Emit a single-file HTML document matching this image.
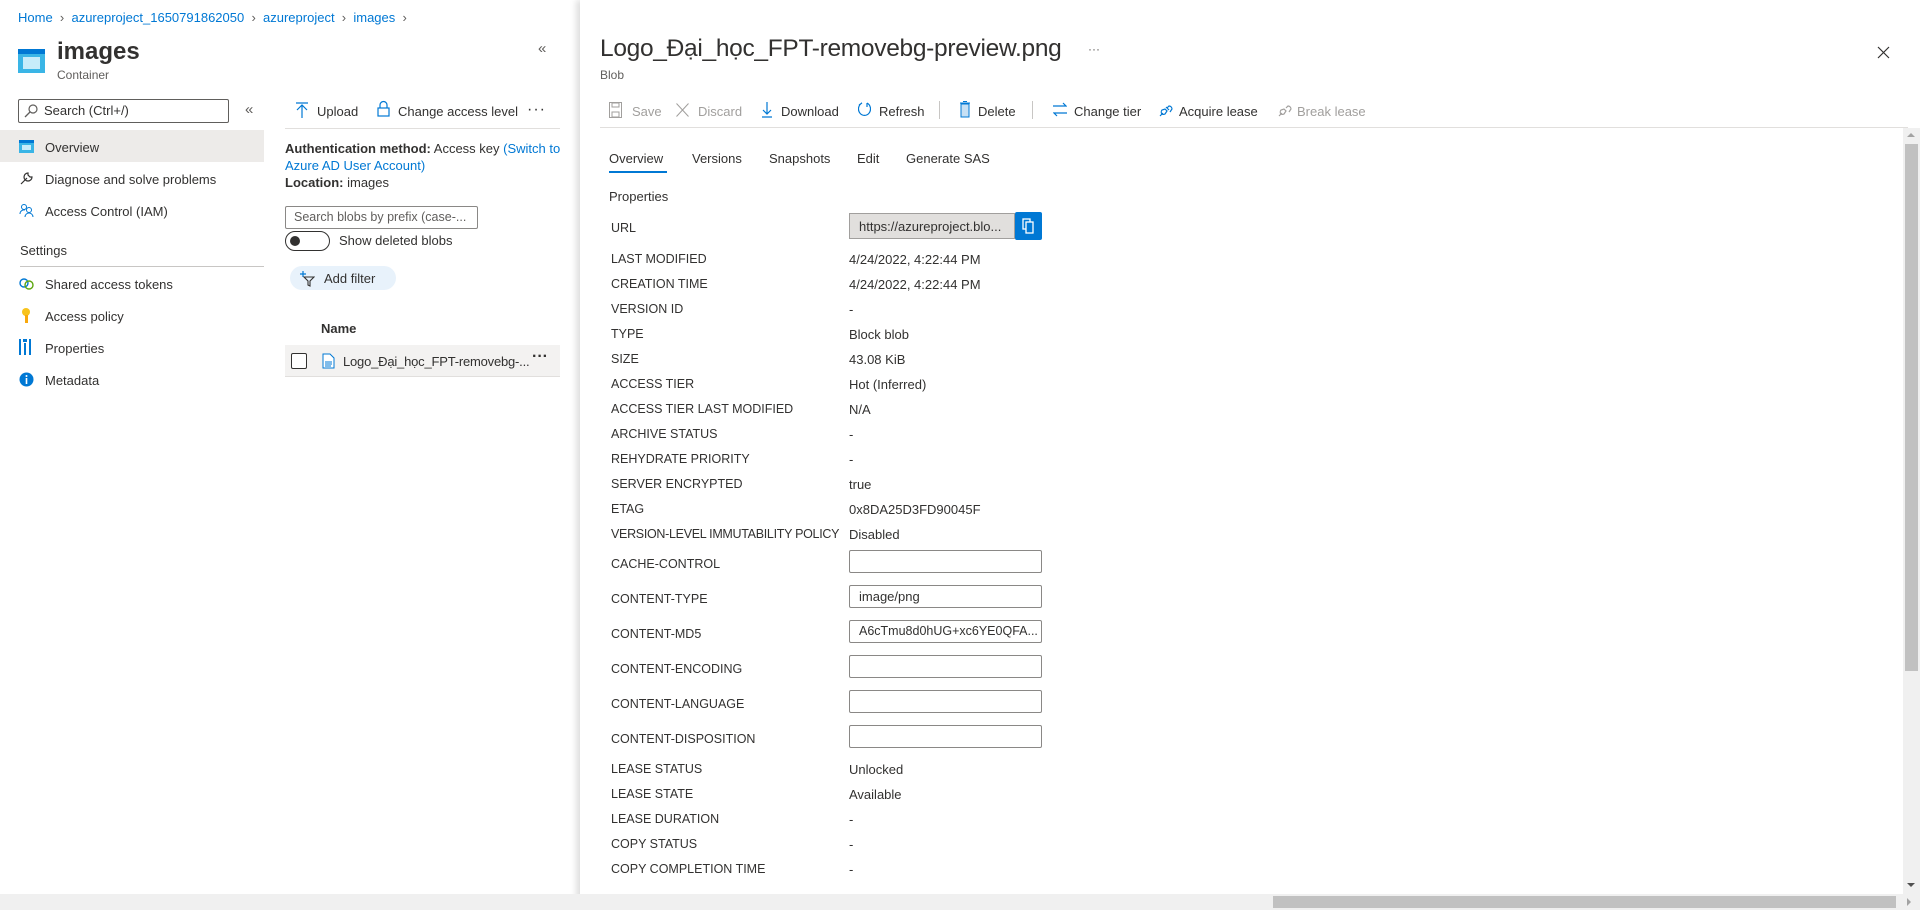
<!DOCTYPE html>
<html><head><meta charset="utf-8"><style>
*{margin:0;padding:0;box-sizing:border-box}
body{width:1920px;height:910px;overflow:hidden;background:#fff;font-family:"Liberation Sans",sans-serif;font-size:13px;color:#323130;position:relative}
.a{position:absolute;white-space:nowrap}
.l{color:#0078d4}
.ic{position:absolute}
.lbl{position:absolute;left:611px;font-size:12.5px;color:#323130}
.val{position:absolute;left:849px}
.inp{position:absolute;left:849px;width:193px;height:23px;border:1px solid #8a8886;border-radius:2px;padding:3px 9px;font-size:13px}
.g{color:#a19f9d}
</style></head><body>
<div class="a l" style="left:18px;top:10px">Home <span style="color:#605e5c">&nbsp;›&nbsp;</span> azureproject_1650791862050 <span style="color:#605e5c">&nbsp;›&nbsp;</span> azureproject <span style="color:#605e5c">&nbsp;›&nbsp;</span> images <span style="color:#605e5c">&nbsp;›</span></div>
<svg class="ic" style="left:18px;top:49px" width="27" height="24"><rect x="0" y="0" width="27" height="24" fill="#3ab5e6"/><rect x="0" y="0" width="27" height="5" fill="#0078d4"/><rect x="5" y="8" width="17" height="12" fill="#c7ecfa"/></svg>
<div class="a" style="left:57px;top:38px;font-size:24px;font-weight:bold;color:#323130">images</div>
<div class="a" style="left:57px;top:68px;font-size:12px;color:#605e5c">Container</div>
<div class="a" style="left:538px;top:40px;font-size:15px;color:#605e5c">«</div>
<div class="a" style="left:18px;top:99px;width:211px;height:24px;border:1px solid #605e5c;border-radius:2px"></div>
<svg class="ic" style="left:24px;top:104px" width="14" height="14"><circle cx="9" cy="5" r="4" fill="none" stroke="#605e5c" stroke-width="1.2"/><path d="M6 8 L1 13" stroke="#605e5c" stroke-width="1.3"/></svg>
<div class="a" style="left:44px;top:103px;color:#323130">Search (Ctrl+/)</div>
<div class="a" style="left:245px;top:101px;font-size:15px;color:#605e5c">«</div>
<div class="a" style="left:0;top:130px;width:264px;height:32px;background:#edebe9"></div>
<svg class="ic" style="left:19px;top:140px" width="15" height="13"><rect width="15" height="13" fill="#3ab5e6"/><rect width="15" height="3" fill="#0078d4"/><rect x="3" y="5" width="9" height="5" fill="#c7ecfa"/></svg>
<div class="a" style="left:45px;top:140px">Overview</div>
<svg class="ic" style="left:19px;top:171px" width="15" height="15"><path d="M2 13 L8 7 M9 2 a4 4 0 1 0 4 4 L11 6 L9 4 Z" fill="none" stroke="#323130" stroke-width="1.2"/></svg>
<div class="a" style="left:45px;top:172px">Diagnose and solve problems</div>
<svg class="ic" style="left:19px;top:203px" width="16" height="15"><circle cx="5" cy="4" r="2.5" fill="none" stroke="#0078d4"/><circle cx="10" cy="7" r="2.5" fill="none" stroke="#0078d4"/><path d="M1 11 a4 4 0 0 1 5 -4 M6 14 a4 4 0 0 1 8 0" fill="none" stroke="#0078d4"/></svg>
<div class="a" style="left:45px;top:204px">Access Control (IAM)</div>
<div class="a" style="left:20px;top:243px">Settings</div>
<div class="a" style="left:20px;top:266px;width:244px;height:1px;background:#c8c6c4"></div>
<svg class="ic" style="left:19px;top:278px" width="15" height="12"><circle cx="5" cy="5" r="4" fill="none" stroke="#0078d4" stroke-width="1.4"/><circle cx="10" cy="7" r="4" fill="none" stroke="#5ea60f" stroke-width="1.4"/></svg>
<div class="a" style="left:45px;top:277px">Shared access tokens</div>
<svg class="ic" style="left:21px;top:307px" width="10" height="17"><circle cx="5" cy="5" r="4" fill="#f8c31d"/><rect x="4" y="8" width="3" height="8" fill="#f8a80d"/></svg>
<div class="a" style="left:45px;top:309px">Access policy</div>
<svg class="ic" style="left:19px;top:339px" width="13" height="16"><rect x="0" y="0" width="2" height="16" fill="#0078d4"/><rect x="5" y="4" width="2" height="12" fill="#0078d4"/><rect x="10" y="0" width="2" height="16" fill="#0078d4"/><rect x="4" y="0" width="4" height="3" fill="#0078d4"/></svg>
<div class="a" style="left:45px;top:341px">Properties</div>
<svg class="ic" style="left:19px;top:372px" width="15" height="15"><circle cx="7.5" cy="7.5" r="7" fill="#0078d4"/><rect x="6.7" y="6" width="1.6" height="6" fill="#fff"/><circle cx="7.5" cy="4" r="1" fill="#fff"/></svg>
<div class="a" style="left:45px;top:373px">Metadata</div>
<svg class="ic" style="left:295px;top:102px" width="14" height="16"><path d="M1 1 H13 M7 3 V16 M2 8 L7 3 L12 8" fill="none" stroke="#0078d4" stroke-width="1.2"/></svg>
<div class="a" style="left:317px;top:104px">Upload</div>
<svg class="ic" style="left:377px;top:100px" width="13" height="17"><path d="M3 8 V5 a3.5 3.5 0 0 1 7 0 V8" fill="none" stroke="#0078d4" stroke-width="1.2"/><rect x="1" y="8" width="11" height="8" fill="none" stroke="#0078d4" stroke-width="1.2"/></svg>
<div class="a" style="left:398px;top:104px">Change access level</div>
<div class="a" style="left:527px;top:101px;font-size:16px;letter-spacing:1px">···</div>
<div class="a" style="left:285px;top:128px;width:275px;height:1px;background:#e1dfdd"></div>
<div class="a" style="left:285px;top:141px"><b>Authentication method:</b> Access key <span class="l">(Switch to</span></div>
<div class="a l" style="left:285px;top:158px">Azure AD User Account)</div>
<div class="a" style="left:285px;top:175px"><b>Location:</b> images</div>
<div class="a" style="left:285px;top:206px;width:193px;height:23px;border:1px solid #8a8886;border-radius:2px;padding:3px 8px;color:#605e5c;font-size:12.5px;overflow:hidden">Search blobs by prefix (case-...</div>
<div class="a" style="left:285px;top:231px;width:45px;height:20px;border:1px solid #323130;border-radius:10px"></div>
<div class="a" style="left:290px;top:236px;width:10px;height:10px;border-radius:5px;background:#323130"></div>
<div class="a" style="left:339px;top:233px">Show deleted blobs</div>
<div class="a" style="left:290px;top:266px;width:106px;height:24px;border-radius:12px;background:#e8f2fb"></div>
<svg class="ic" style="left:299px;top:270px" width="16" height="17"><path d="M1 4 H7 M4 1 V7" stroke="#0078d4" stroke-width="1.2"/><path d="M5 7 H15 L11 11 V16 L9 15 V11 Z" fill="none" stroke="#323130" stroke-width="1.1"/></svg>
<div class="a" style="left:324px;top:271px">Add filter</div>
<div class="a" style="left:321px;top:321px;font-weight:bold">Name</div>
<div class="a" style="left:285px;top:345px;width:275px;height:32px;background:#f3f2f1;border-bottom:1px solid #e1dfdd"></div>
<div class="a" style="left:291px;top:353px;width:16px;height:16px;border:1px solid #323130;border-radius:2px;background:#fff"></div>
<svg class="ic" style="left:322px;top:353px" width="13" height="16"><path d="M1 1 H8 L12 5 V15 H1 Z" fill="#fff" stroke="#0078d4"/><path d="M3 9 H10 M3 11 H10 M3 13 H9" stroke="#0078d4"/></svg>
<div class="a" style="left:343px;top:354px;letter-spacing:-0.2px">Logo_Đại_học_FPT-removebg-...</div>
<div class="a" style="left:532px;top:348px;font-size:16px;font-weight:bold">···</div>
<div class="a" style="left:580px;top:0;width:1340px;height:910px;background:#fff;box-shadow:-4px 0 6px rgba(0,0,0,0.13)"></div>
<div class="a" style="left:600px;top:35px;font-size:24.5px;letter-spacing:-0.3px;color:#323130">Logo_Đại_học_FPT-removebg-preview.png</div>
<div class="a" style="left:1088px;top:42px;font-size:12px;color:#605e5c">···</div>
<div class="a" style="left:600px;top:68px;font-size:12px;color:#605e5c">Blob</div>
<svg class="ic" style="left:1877px;top:46px" width="13" height="13"><path d="M1 1 L12 12 M12 1 L1 12" stroke="#323130" stroke-width="1.2"/></svg>
<svg class="ic" style="left:609px;top:102px" width="13" height="16"><rect x="0.5" y="0.5" width="12" height="15" fill="none" stroke="#a19f9d"/><rect x="3" y="1" width="7" height="4" fill="none" stroke="#a19f9d"/><rect x="3" y="10" width="7" height="5" fill="none" stroke="#a19f9d"/></svg>
<div class="a g" style="left:632px;top:104px">Save</div>
<svg class="ic" style="left:676px;top:103px" width="13" height="14"><path d="M0.5 0.5 L12.5 13.5 M12.5 0.5 L0.5 13.5" stroke="#a19f9d"/></svg>
<div class="a g" style="left:698px;top:104px">Discard</div>
<svg class="ic" style="left:762px;top:101px" width="10" height="17"><path d="M5 1 V13 M1 9 L5 13 L9 9 M0 16 H10" fill="none" stroke="#0078d4" stroke-width="1.2"/></svg>
<div class="a" style="left:781px;top:104px">Download</div>
<svg class="ic" style="left:858px;top:101px" width="13" height="17"><path d="M4 2 A6 6.5 0 1 0 9 2 M9 2 L9 6 M4 2 L1 4" fill="none" stroke="#0078d4" stroke-width="1.2"/></svg>
<div class="a" style="left:879px;top:104px">Refresh</div>
<div class="a" style="left:939px;top:101px;width:1px;height:18px;background:#c8c6c4"></div>
<svg class="ic" style="left:960px;top:101px" width="10" height="17"><rect x="1" y="3" width="8" height="13" fill="#c7e0f4" stroke="#0078d4"/><path d="M0 2 H10 M3 0.5 H7" stroke="#0078d4"/></svg>
<div class="a" style="left:978px;top:104px">Delete</div>
<div class="a" style="left:1032px;top:101px;width:1px;height:18px;background:#c8c6c4"></div>
<svg class="ic" style="left:1053px;top:102px" width="14" height="15"><path d="M0 4 H13 L10 1 M14 11 H1 L4 14" fill="none" stroke="#0078d4" stroke-width="1.2"/></svg>
<div class="a" style="left:1074px;top:104px">Change tier</div>
<svg class="ic" style="left:1159px;top:102px" width="14" height="15"><path d="M1 14 L4 11 M3 12 a3 3 0 0 1 0 -4 L6 7 L8 9 L6 12 a3 3 0 0 1 -3 0 M8 6 L10 4 a3 3 0 0 1 3 3 L11 10 M7 5 L10 8" fill="none" stroke="#0078d4" stroke-width="1.2"/></svg>
<div class="a" style="left:1179px;top:104px">Acquire lease</div>
<svg class="ic" style="left:1278px;top:102px" width="14" height="15"><path d="M1 14 L4 11 M3 12 a3 3 0 0 1 0 -4 L6 7 L8 9 L6 12 a3 3 0 0 1 -3 0 M8 6 L10 4 a3 3 0 0 1 3 3 L11 10" fill="none" stroke="#a19f9d" stroke-width="1.2"/></svg>
<div class="a g" style="left:1297px;top:104px">Break lease</div>
<div class="a" style="left:600px;top:127px;width:1308px;height:1px;background:#e1dfdd"></div>
<div class="a" style="left:1903px;top:128px;width:17px;height:766px;background:#f0f0f0"></div>
<div class="a" style="left:1905px;top:144px;width:13px;height:527px;background:#c1c1c1"></div>
<div class="a" style="left:1907px;top:133px;width:0;height:0;border-left:4px solid transparent;border-right:4px solid transparent;border-bottom:4px solid #a3a3a3"></div>
<div class="a" style="left:1907px;top:883px;width:0;height:0;border-left:4px solid transparent;border-right:4px solid transparent;border-top:4px solid #505050"></div>
<div class="a" style="left:0;top:894px;width:1920px;height:16px;background:#f0f0f0"></div>
<div class="a" style="left:1273px;top:896px;width:623px;height:12px;background:#c1c1c1"></div>
<div class="a" style="left:1907px;top:898px;width:0;height:0;border-top:4px solid transparent;border-bottom:4px solid transparent;border-left:4px solid #a3a3a3"></div>
<div class="a" style="left:609px;top:151px">Overview</div>
<div class="a" style="left:692px;top:151px">Versions</div>
<div class="a" style="left:769px;top:151px">Snapshots</div>
<div class="a" style="left:857px;top:151px">Edit</div>
<div class="a" style="left:906px;top:151px">Generate SAS</div>
<div class="a" style="left:609px;top:171px;width:58px;height:2px;background:#0078d4"></div>
<div class="a" style="left:609px;top:189px">Properties</div>
<div class="lbl" style="top:221px">URL</div>
<div class="a" style="left:849px;top:213px;width:166px;height:26px;background:#e1dfdd;border:1px solid #a19f9d;padding:5px 0 0 9px;font-size:13px;overflow:hidden">https://azureproject.blo...</div>
<div class="a" style="left:1015px;top:212px;width:27px;height:28px;background:#0078d4;border-radius:2px"></div>
<svg class="ic" style="left:1022px;top:218px" width="13" height="17"><rect x="1" y="1" width="7" height="10" fill="none" stroke="#fff" stroke-width="1.3"/><rect x="4" y="4" width="7" height="11" fill="#0078d4" stroke="#fff" stroke-width="1.3"/></svg>
<div class="lbl" style="top:252px">LAST MODIFIED</div><div class="val" style="top:252px">4/24/2022, 4:22:44 PM</div>
<div class="lbl" style="top:277px">CREATION TIME</div><div class="val" style="top:277px">4/24/2022, 4:22:44 PM</div>
<div class="lbl" style="top:302px">VERSION ID</div><div class="val" style="top:302px">-</div>
<div class="lbl" style="top:327px">TYPE</div><div class="val" style="top:327px">Block blob</div>
<div class="lbl" style="top:352px">SIZE</div><div class="val" style="top:352px">43.08 KiB</div>
<div class="lbl" style="top:377px">ACCESS TIER</div><div class="val" style="top:377px">Hot (Inferred)</div>
<div class="lbl" style="top:402px">ACCESS TIER LAST MODIFIED</div><div class="val" style="top:402px">N/A</div>
<div class="lbl" style="top:427px">ARCHIVE STATUS</div><div class="val" style="top:427px">-</div>
<div class="lbl" style="top:452px">REHYDRATE PRIORITY</div><div class="val" style="top:452px">-</div>
<div class="lbl" style="top:477px">SERVER ENCRYPTED</div><div class="val" style="top:477px">true</div>
<div class="lbl" style="top:502px">ETAG</div><div class="val" style="top:502px">0x8DA25D3FD90045F</div>
<div class="lbl" style="top:527px;letter-spacing:-0.3px">VERSION-LEVEL IMMUTABILITY POLICY</div><div class="val" style="top:527px">Disabled</div>
<div class="lbl" style="top:557px">CACHE-CONTROL</div><div class="inp" style="top:550px"></div>
<div class="lbl" style="top:592px">CONTENT-TYPE</div><div class="inp" style="top:585px">image/png</div>
<div class="lbl" style="top:627px">CONTENT-MD5</div><div class="inp" style="top:620px;font-size:12.5px;overflow:hidden">A6cTmu8d0hUG+xc6YE0QFA...</div>
<div class="lbl" style="top:662px">CONTENT-ENCODING</div><div class="inp" style="top:655px"></div>
<div class="lbl" style="top:697px">CONTENT-LANGUAGE</div><div class="inp" style="top:690px"></div>
<div class="lbl" style="top:732px">CONTENT-DISPOSITION</div><div class="inp" style="top:725px"></div>
<div class="lbl" style="top:762px">LEASE STATUS</div><div class="val" style="top:762px">Unlocked</div>
<div class="lbl" style="top:787px">LEASE STATE</div><div class="val" style="top:787px">Available</div>
<div class="lbl" style="top:812px">LEASE DURATION</div><div class="val" style="top:812px">-</div>
<div class="lbl" style="top:837px">COPY STATUS</div><div class="val" style="top:837px">-</div>
<div class="lbl" style="top:862px">COPY COMPLETION TIME</div><div class="val" style="top:862px">-</div>
</body></html>
